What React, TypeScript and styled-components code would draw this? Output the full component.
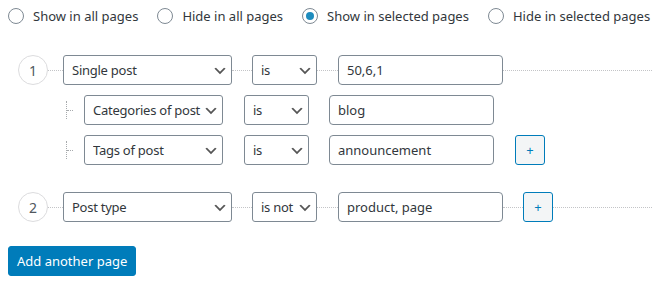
import React, { useState } from "react";
import styled, { createGlobalStyle } from "styled-components";

const GlobalStyle = createGlobalStyle`
  html, body {
    margin: 0;
    padding: 0;
    background: #fff;
  }
  body {
    font-family: "Noto Sans", "Open Sans", sans-serif;
    font-size: 13px;
    color: #32373c;
  }
`;

const Page = styled.div`
  padding: 8px;
  width: 660px;
  box-sizing: border-box;
`;

const RadioBar = styled.div`
  display: flex;
  align-items: center;
  gap: 19px;
  height: 16px;
  margin-bottom: 31px;
`;

const RadioLabel = styled.label`
  display: flex;
  align-items: center;
  gap: 9px;
  white-space: nowrap;
  cursor: pointer;
  line-height: 16px;
`;

const RadioInput = styled.input`
  appearance: none;
  margin: 0;
  width: 16px;
  height: 16px;
  border: 1px solid #7e8993;
  border-radius: 50%;
  box-sizing: border-box;
  display: flex;
  align-items: center;
  justify-content: center;
  background: #fff;

  &:checked::before {
    content: "";
    width: 8px;
    height: 8px;
    border-radius: 50%;
    background: #1e8cbe;
  }
`;

const RuleGroup = styled.div<{ $gapTop?: number }>`
  display: flex;
  flex-direction: column;
  gap: 10px;
  margin-top: ${(p) => p.$gapTop ?? 0}px;
`;

const Row = styled.div`
  display: flex;
  align-items: center;
  height: 30px;
`;

const SubRow = styled(Row)`
  padding-left: 58px;
`;

const Number = styled.span`
  width: 30px;
  height: 30px;
  margin-left: 10px;
  box-sizing: border-box;
  border: 1px solid #dcdcde;
  border-radius: 50%;
  display: flex;
  align-items: center;
  justify-content: center;
  font-size: 14px;
  color: #50575e;
  flex-shrink: 0;
`;

const Connector = styled.span<{ $w?: number }>`
  border-top: 1px dotted #c3c4c7;
  height: 0;
  width: ${(p) => (p.$w ? `${p.$w}px` : "auto")};
  flex: ${(p) => (p.$w ? "0 0 auto" : "1 1 auto")};
`;

const Spacer = styled.span<{ $w: number }>`
  width: ${(p) => p.$w}px;
  flex-shrink: 0;
`;

const TreeMark = styled.span`
  display: flex;
  align-items: center;
  width: 7px;
  height: 18px;
  border-left: 1px dotted #a7aaad;
  margin-right: 10px;
  flex-shrink: 0;
`;

const TreeDash = styled.span`
  width: 6px;
  border-top: 1px dotted #a7aaad;
`;

const SelectBox = styled.div<{ $w: number }>`
  position: relative;
  width: ${(p) => p.$w}px;
  height: 30px;
  flex-shrink: 0;
`;

const Select = styled.select`
  appearance: none;
  width: 100%;
  height: 100%;
  margin: 0;
  padding: 0 0 0 8px;
  box-sizing: border-box;
  border: 1px solid #7e8993;
  border-radius: 3px;
  background: #fff;
  font: inherit;
  font-size: 13px;
  letter-spacing: -0.25px;
  color: #32373c;
  outline: none;
`;

const Chevron = styled.svg`
  position: absolute;
  right: 4px;
  top: 8px;
  width: 16px;
  height: 16px;
  pointer-events: none;
`;

const TextInput = styled.input`
  width: 165px;
  height: 30px;
  margin: 0;
  padding: 0 8px;
  box-sizing: border-box;
  border: 1px solid #7e8993;
  border-radius: 4px;
  font: inherit;
  font-size: 13px;
  color: #32373c;
  flex-shrink: 0;
  outline: none;
`;

const PlusButton = styled.button`
  width: 30px;
  height: 30px;
  padding: 0;
  box-sizing: border-box;
  border: 1px solid #007cba;
  border-radius: 3px;
  background: #f3f5f6;
  color: #007cba;
  font: inherit;
  font-size: 13px;
  flex-shrink: 0;
  cursor: pointer;
`;

const PrimaryButton = styled.button`
  margin-top: 24px;
  height: 30px;
  padding: 0 8px;
  border: 1px solid #007cba;
  border-radius: 3px;
  background: #007cba;
  color: #fff;
  font: inherit;
  font-size: 13px;
  cursor: pointer;
`;

function Dropdown({ width, value, options }: { width: number; value: string; options: string[] }) {
  return (
    <SelectBox $w={width}>
      <Select defaultValue={value}>
        {options.map((o) => (
          <option key={o}>{o}</option>
        ))}
      </Select>
      <Chevron viewBox="0 0 20 20">
        <path d="M5 6l5 5 5-5 2 1-7 7-7-7 2-1z" fill="#555" />
      </Chevron>
    </SelectBox>
  );
}

const modes = [
  "Show in all pages",
  "Hide in all pages",
  "Show in selected pages",
  "Hide in selected pages",
];

const pageTypes = ["Single post", "Post type", "Categories of post", "Tags of post"];

export default function App() {
  const [mode, setMode] = useState("Show in selected pages");

  return (
    <Page>
      <GlobalStyle />
      <RadioBar>
        {modes.map((m) => (
          <RadioLabel key={m}>
            <RadioInput
              type="radio"
              name="mode"
              checked={mode === m}
              onChange={() => setMode(m)}
            />
            {m}
          </RadioLabel>
        ))}
      </RadioBar>

      <RuleGroup>
        <Row>
          <Number>1</Number>
          <Connector $w={15} />
          <Dropdown width={169} value="Single post" options={pageTypes} />
          <Connector $w={20} />
          <Dropdown width={65} value="is" options={["is", "is not"]} />
          <Connector $w={21} />
          <TextInput defaultValue="50,6,1" />
          <Connector />
        </Row>
        <SubRow>
          <TreeMark>
            <TreeDash />
          </TreeMark>
          <Dropdown width={139} value="Categories of post" options={pageTypes} />
          <Spacer $w={21} />
          <Dropdown width={65} value="is" options={["is", "is not"]} />
          <Spacer $w={20} />
          <TextInput defaultValue="blog" />
        </SubRow>
        <SubRow>
          <TreeMark>
            <TreeDash />
          </TreeMark>
          <Dropdown width={139} value="Tags of post" options={pageTypes} />
          <Spacer $w={21} />
          <Dropdown width={65} value="is" options={["is", "is not"]} />
          <Spacer $w={20} />
          <TextInput defaultValue="announcement" />
          <Spacer $w={21} />
          <PlusButton>+</PlusButton>
        </SubRow>
      </RuleGroup>

      <RuleGroup $gapTop={27}>
        <Row>
          <Number>2</Number>
          <Connector $w={15} />
          <Dropdown width={169} value="Post type" options={pageTypes} />
          <Connector $w={20} />
          <Dropdown width={65} value="is not" options={["is", "is not"]} />
          <Connector $w={21} />
          <TextInput defaultValue="product, page" />
          <Connector $w={20} />
          <PlusButton>+</PlusButton>
          <Connector />
        </Row>
      </RuleGroup>

      <PrimaryButton>Add another page</PrimaryButton>
    </Page>
  );
}
